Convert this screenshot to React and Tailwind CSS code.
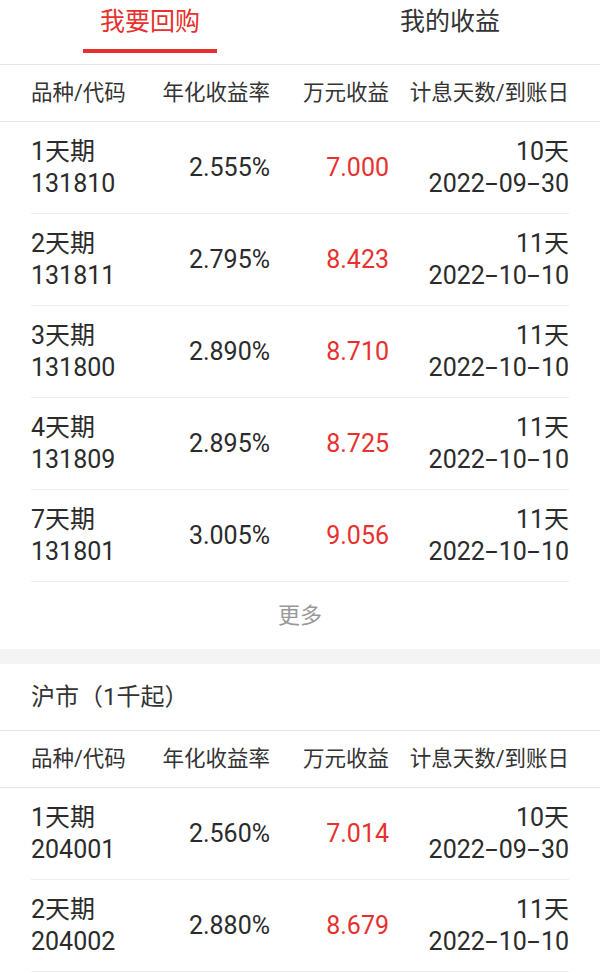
import React, { useState } from 'react';

const shRepo = [
  { name: '1天期', code: '131810', rate: '2.555%', income: '7.000', days: '10天', date: '2022-09-30' },
  { name: '2天期', code: '131811', rate: '2.795%', income: '8.423', days: '11天', date: '2022-10-10' },
  { name: '3天期', code: '131800', rate: '2.890%', income: '8.710', days: '11天', date: '2022-10-10' },
  { name: '4天期', code: '131809', rate: '2.895%', income: '8.725', days: '11天', date: '2022-10-10' },
  { name: '7天期', code: '131801', rate: '3.005%', income: '9.056', days: '11天', date: '2022-10-10' },
];

const hsRepo = [
  { name: '1天期', code: '204001', rate: '2.560%', income: '7.014', days: '10天', date: '2022-09-30' },
  { name: '2天期', code: '204002', rate: '2.880%', income: '8.679', days: '11天', date: '2022-10-10' },
];

const cols = 'grid grid-cols-[110px_129px_119px_180px] items-center';

// the dash in the date is drawn as wide as a digit
const DateText = ({ value }) => {
  const parts = value.split('-');
  return (
    <div className="flex justify-end">
      {parts.map((p, i) => (
        <React.Fragment key={i}>
          {i > 0 && (
            <span className="inline-block w-[14px] text-center">
              <span className="inline-block scale-x-[1.8]">-</span>
            </span>
          )}
          <span>{p}</span>
        </React.Fragment>
      ))}
    </div>
  );
};

const TableHead = () => (
  <div className="h-[58px] border-y border-[#e6e6e6] px-[31px] text-[21.5px] text-[#333] flex items-center">
    <div className={`${cols} w-full`}>
      <div className="whitespace-nowrap">品种/代码</div>
      <div className="text-right">年化收益率</div>
      <div className="text-right">万元收益</div>
      <div className="text-right whitespace-nowrap">计息天数/到账日</div>
    </div>
  </div>
);

const Row = ({ item }) => (
  <div className="px-[31px]">
    <div className={`${cols} h-[92px] border-b border-[#ececec] text-[25px] leading-[32px] text-[#2b2b2b]`}>
      <div>
        <div>{item.name}</div>
        <div>{item.code}</div>
      </div>
      <div className="text-right">{item.rate}</div>
      <div className="text-right text-[#e8302e]">{item.income}</div>
      <div className="text-right">
        <div>{item.days}</div>
        <DateText value={item.date} />
      </div>
    </div>
  </div>
);

export default function App() {
  const [tab, setTab] = useState(0);

  return (
    <div className="w-[600px] min-h-[973px] bg-white font-['Roboto','Noto_Sans_CJK_SC',sans-serif] overflow-hidden">
      {/* tabs */}
      <div className="h-[64px] flex">
        {['我要回购', '我的收益'].map((t, i) => (
          <button
            key={t}
            onClick={() => setTab(i)}
            className="flex-1 flex flex-col items-center pt-[6px]"
          >
            <span className={`text-[25px] leading-[32px] ${tab === i ? 'text-[#e8302e]' : 'text-[#333]'}`}>{t}</span>
            {tab === i && <span className="mt-[11px] block w-[134px] h-[4px] bg-[#e8302e]" />}
          </button>
        ))}
      </div>

      <TableHead />
      {shRepo.map((item) => (
        <Row key={item.code} item={item} />
      ))}
      <div className="h-[67px] flex items-center justify-center text-[22px] text-[#999]">更多</div>

      <div className="h-[15px] bg-[#f4f4f4]" />

      <div className="h-[66px] flex items-center px-[31px] text-[24px] text-[#333]">沪市（1千起）</div>
      <TableHead />
      {hsRepo.map((item) => (
        <Row key={item.code} item={item} />
      ))}
    </div>
  );
}
